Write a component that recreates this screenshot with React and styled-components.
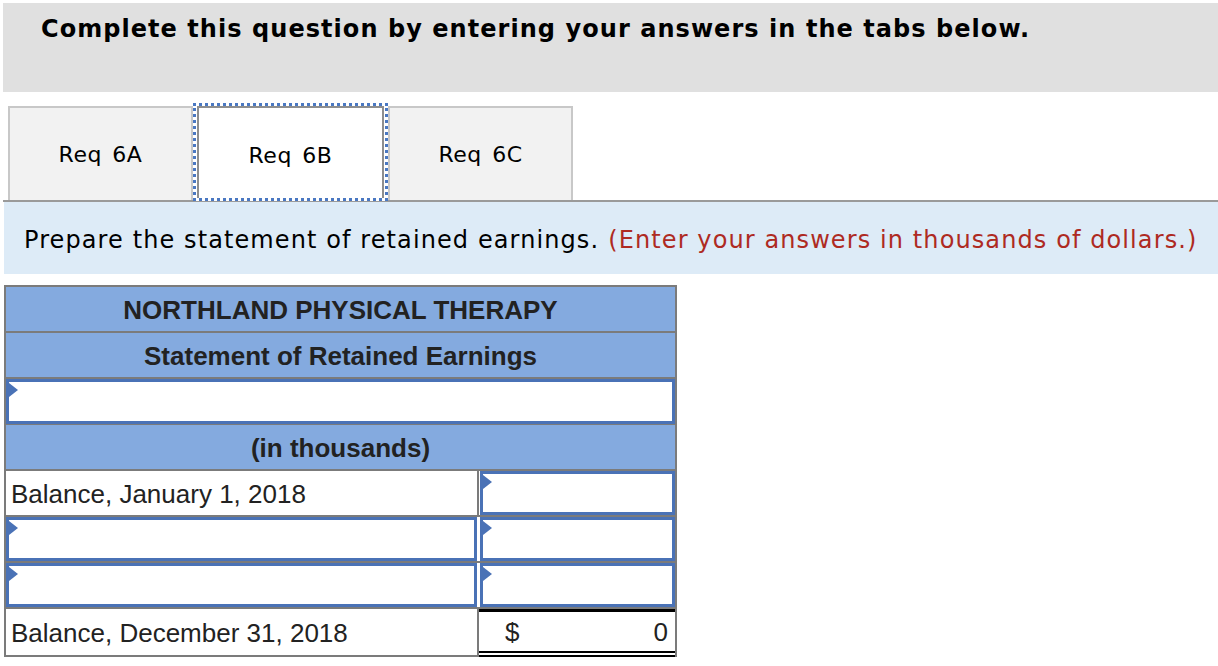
import React from "react";
import styled, { createGlobalStyle } from "styled-components";

const GlobalStyle = createGlobalStyle`
  html, body { margin: 0; padding: 0; background: #ffffff; }
  body { font-family: "DejaVu Sans", Verdana, sans-serif; }
  * { box-sizing: border-box; }
`;

const Page = styled.div`
  width: 1218px;
  padding: 3px 0 0 3px;
  display: flex;
  flex-direction: column;
`;

const Banner = styled.div`
  height: 89px;
  background: #e0e0e0;
  padding: 12px 0 0 38px;
  font-family: "DejaVu Sans", Verdana, sans-serif;
  font-weight: bold;
  font-size: 24px;
  letter-spacing: 1.05px;
  color: #000;
`;

const TabBar = styled.div`
  margin-top: 14px;
  display: flex;
  padding-left: 5px;
  border-bottom: 2px solid #9a9a9a;
`;

const Tab = styled.div`
  width: ${(p) => (p.$active ? 195 : 185)}px;
  height: ${(p) => (p.$active ? 98 : 94)}px;
  margin-top: ${(p) => (p.$active ? -3 : 0)}px;
  margin-bottom: ${(p) => (p.$active ? -3 : 0)}px;
  position: relative;
  z-index: ${(p) => (p.$active ? 1 : 0)};
  display: flex;
  align-items: center;
  justify-content: center;
  font-family: "DejaVu Sans", Verdana, sans-serif;
  font-size: 22px;
  letter-spacing: 0.5px;
  word-spacing: 3px;
  color: #000;
  background: ${(p) => (p.$active ? "#ffffff" : "#f2f2f2")};
  border: ${(p) => (p.$active ? "3px dotted #4a78c2" : "2px solid #c8c8c8")};
  border-bottom: ${(p) => (p.$active ? "3px dotted #4a78c2" : "none")};
`;

const ActiveInner = styled.div`
  position: absolute;
  inset: 0 1px 0 1px;
  border: 2px solid #8e8e8e;
  border-bottom: none;
  display: flex;
  align-items: center;
  justify-content: center;
  padding-top: 4px;
`;

const Instruction = styled.div`
  margin-left: 1px;
  height: 72px;
  background: #ddebf7;
  display: flex;
  align-items: center;
  padding: 4px 0 0 20px;
  font-family: "DejaVu Sans", Verdana, sans-serif;
  font-size: 24px;
  letter-spacing: 1.1px;
  color: #000;
  white-space: nowrap;
`;

const Note = styled.span`
  color: #ae2a22;
  margin-left: 9px;
`;

const Sheet = styled.div`
  margin: 11px 0 0 1px;
  width: 673px;
  border: 2px solid #7b7b7b;
  border-bottom: none;
  font-family: "Liberation Sans", Arial, sans-serif;
  font-size: 26px;
  color: #222;
`;

const Row = styled.div`
  display: grid;
  grid-template-columns: ${(p) => (p.$split ? "473px 1fr" : "1fr")};
  height: 46px;
  border-bottom: 2px solid #7b7b7b;
`;

const HeadCell = styled.div`
  background: #84aadf;
  display: flex;
  align-items: center;
  justify-content: center;
  font-weight: bold;
  color: #222;
  padding-top: 2px;
`;

const LabelCell = styled.div`
  background: #fff;
  display: flex;
  align-items: center;
  padding: 3px 0 0 5px;
  border-right: ${(p) => (p.$divider ? "2px solid #7b7b7b" : "none")};
`;

const InputCell = styled.div`
  position: relative;
  background: #fff;
  border: 3px solid #4a72b6;
  margin: ${(p) => p.$m || "0"};
  &::before {
    content: "";
    position: absolute;
    left: 0;
    top: 1px;
    border-style: solid;
    border-width: 7px 0 7px 9px;
    border-color: transparent transparent transparent #4a72b6;
  }
`;

const TotalCell = styled.div`
  background: #fff;
  border-top: 3px solid #000;
  border-bottom: 6px double #000;
  display: flex;
  align-items: center;
  justify-content: space-between;
  padding: 2px 7px 0 26px;
  margin-bottom: -2px;
`;

const TotalRow = styled(Row)`
  height: 48px;
  border-bottom: 2px solid #7b7b7b;
`;

export default function App() {
  return (
    <>
      <GlobalStyle />
      <Page>
        <Banner>Complete this question by entering your answers in the tabs below.</Banner>
        <TabBar>
          <Tab>Req 6A</Tab>
          <Tab $active>
            <ActiveInner>Req 6B</ActiveInner>
          </Tab>
          <Tab>Req 6C</Tab>
        </TabBar>
        <Instruction>
          Prepare the statement of retained earnings.
          <Note>(Enter your answers in thousands of dollars.)</Note>
        </Instruction>
        <Sheet>
          <Row>
            <HeadCell>NORTHLAND PHYSICAL THERAPY</HeadCell>
          </Row>
          <Row>
            <HeadCell>Statement of Retained Earnings</HeadCell>
          </Row>
          <Row>
            <InputCell $m="0 0 -1px 0" />
          </Row>
          <Row>
            <HeadCell>(in thousands)</HeadCell>
          </Row>
          <Row $split>
            <LabelCell $divider>Balance, January 1, 2018</LabelCell>
            <InputCell $m="0 0 0 1px" />
          </Row>
          <Row $split>
            <InputCell $m="0 2px 0 0" />
            <InputCell $m="0 0 0 1px" />
          </Row>
          <Row $split>
            <InputCell $m="0 2px 0 0" />
            <InputCell $m="0 0 0 1px" />
          </Row>
          <TotalRow $split>
            <LabelCell $divider>Balance, December 31, 2018</LabelCell>
            <TotalCell>
              <span>$</span>
              <span>0</span>
            </TotalCell>
          </TotalRow>
        </Sheet>
      </Page>
    </>
  );
}
